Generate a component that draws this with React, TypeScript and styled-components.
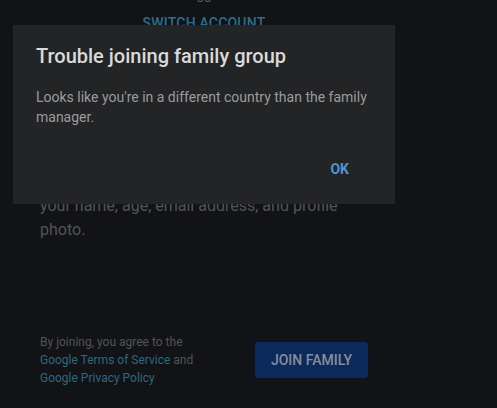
import React from "react";
import styled, { createGlobalStyle } from "styled-components";

const Global = createGlobalStyle`
  html, body {
    margin: 0;
    padding: 0;
    background: #121316;
    overflow: hidden;
  }
  * { box-sizing: border-box; }
`;

const Page = styled.div`
  position: relative;
  width: 497px;
  height: 408px;
  background: #121316;
  font-family: Roboto, "Noto Sans", sans-serif;
  overflow: hidden;
`;

const Column = styled.div`
  width: 408px;
  padding: 0 40px;
  display: flex;
  flex-direction: column;
`;

const Email = styled.div`
  margin-top: -16px;
  font-size: 14px;
  line-height: 20px;
  color: #5a5b5e;
  text-align: center;
`;

const SwitchLink = styled.a`
  margin-top: 9px;
  align-self: center;
  font-size: 14px;
  line-height: 20px;
  font-weight: 500;
  letter-spacing: 0.2px;
  text-transform: uppercase;
  color: #2a6f8c;
  text-decoration: none;
`;

const Paragraph = styled.p`
  margin: 161px 0 0;
  font-size: 16px;
  line-height: 24px;
  color: #535458;
`;

const Footer = styled.div`
  margin-top: 91px;
  display: flex;
  align-items: center;
  justify-content: space-between;
`;

const Terms = styled.div`
  font-size: 12px;
  line-height: 18px;
  color: #525357;
`;

const TermsLink = styled.a`
  color: #2b6883;
  text-decoration: none;
`;

const JoinButton = styled.button`
  width: 113px;
  height: 36px;
  border: none;
  border-radius: 3px;
  background: #0b2a5c;
  color: #858d99;
  font-family: Roboto, sans-serif;
  font-size: 14px;
  font-weight: 500;
  text-transform: uppercase;
  padding: 0;
`;

const Dialog = styled.div`
  position: absolute;
  left: 13px;
  top: 25px;
  width: 382px;
  height: 179px;
  background: #232426;
  padding: 18px 23px 0;
  display: flex;
  flex-direction: column;
`;

const Title = styled.h2`
  margin: 0;
  font-size: 20px;
  line-height: 26px;
  font-weight: 500;
  color: #dadada;
`;

const Body = styled.p`
  margin: 18px 0 0;
  font-size: 14px;
  line-height: 20px;
  color: #9b9b9b;
`;

const Actions = styled.div`
  margin-top: 32px;
  display: flex;
  justify-content: flex-end;
  padding-right: 15px;
`;

const OkButton = styled.button`
  border: none;
  background: transparent;
  padding: 0 8px;
  font-family: Roboto, sans-serif;
  font-size: 14px;
  line-height: 20px;
  font-weight: 700;
  color: #4f95d6;
`;

export default function App() {
  return (
    <Page>
      <Global />
      <Column>
        <Email>gg</Email>
        <SwitchLink href="#">Switch account</SwitchLink>
        <Paragraph>
          your name, age, email address, and profile photo.
        </Paragraph>
        <Footer>
          <Terms>
            By joining, you agree to the
            <br />
            <TermsLink href="#">Google Terms of Service</TermsLink> and
            <br />
            <TermsLink href="#">Google Privacy Policy</TermsLink>
          </Terms>
          <JoinButton>Join family</JoinButton>
        </Footer>
      </Column>
      <Dialog>
        <Title>Trouble joining family group</Title>
        <Body>
          Looks like you're in a different country than the family manager.
        </Body>
        <Actions>
          <OkButton>OK</OkButton>
        </Actions>
      </Dialog>
    </Page>
  );
}
